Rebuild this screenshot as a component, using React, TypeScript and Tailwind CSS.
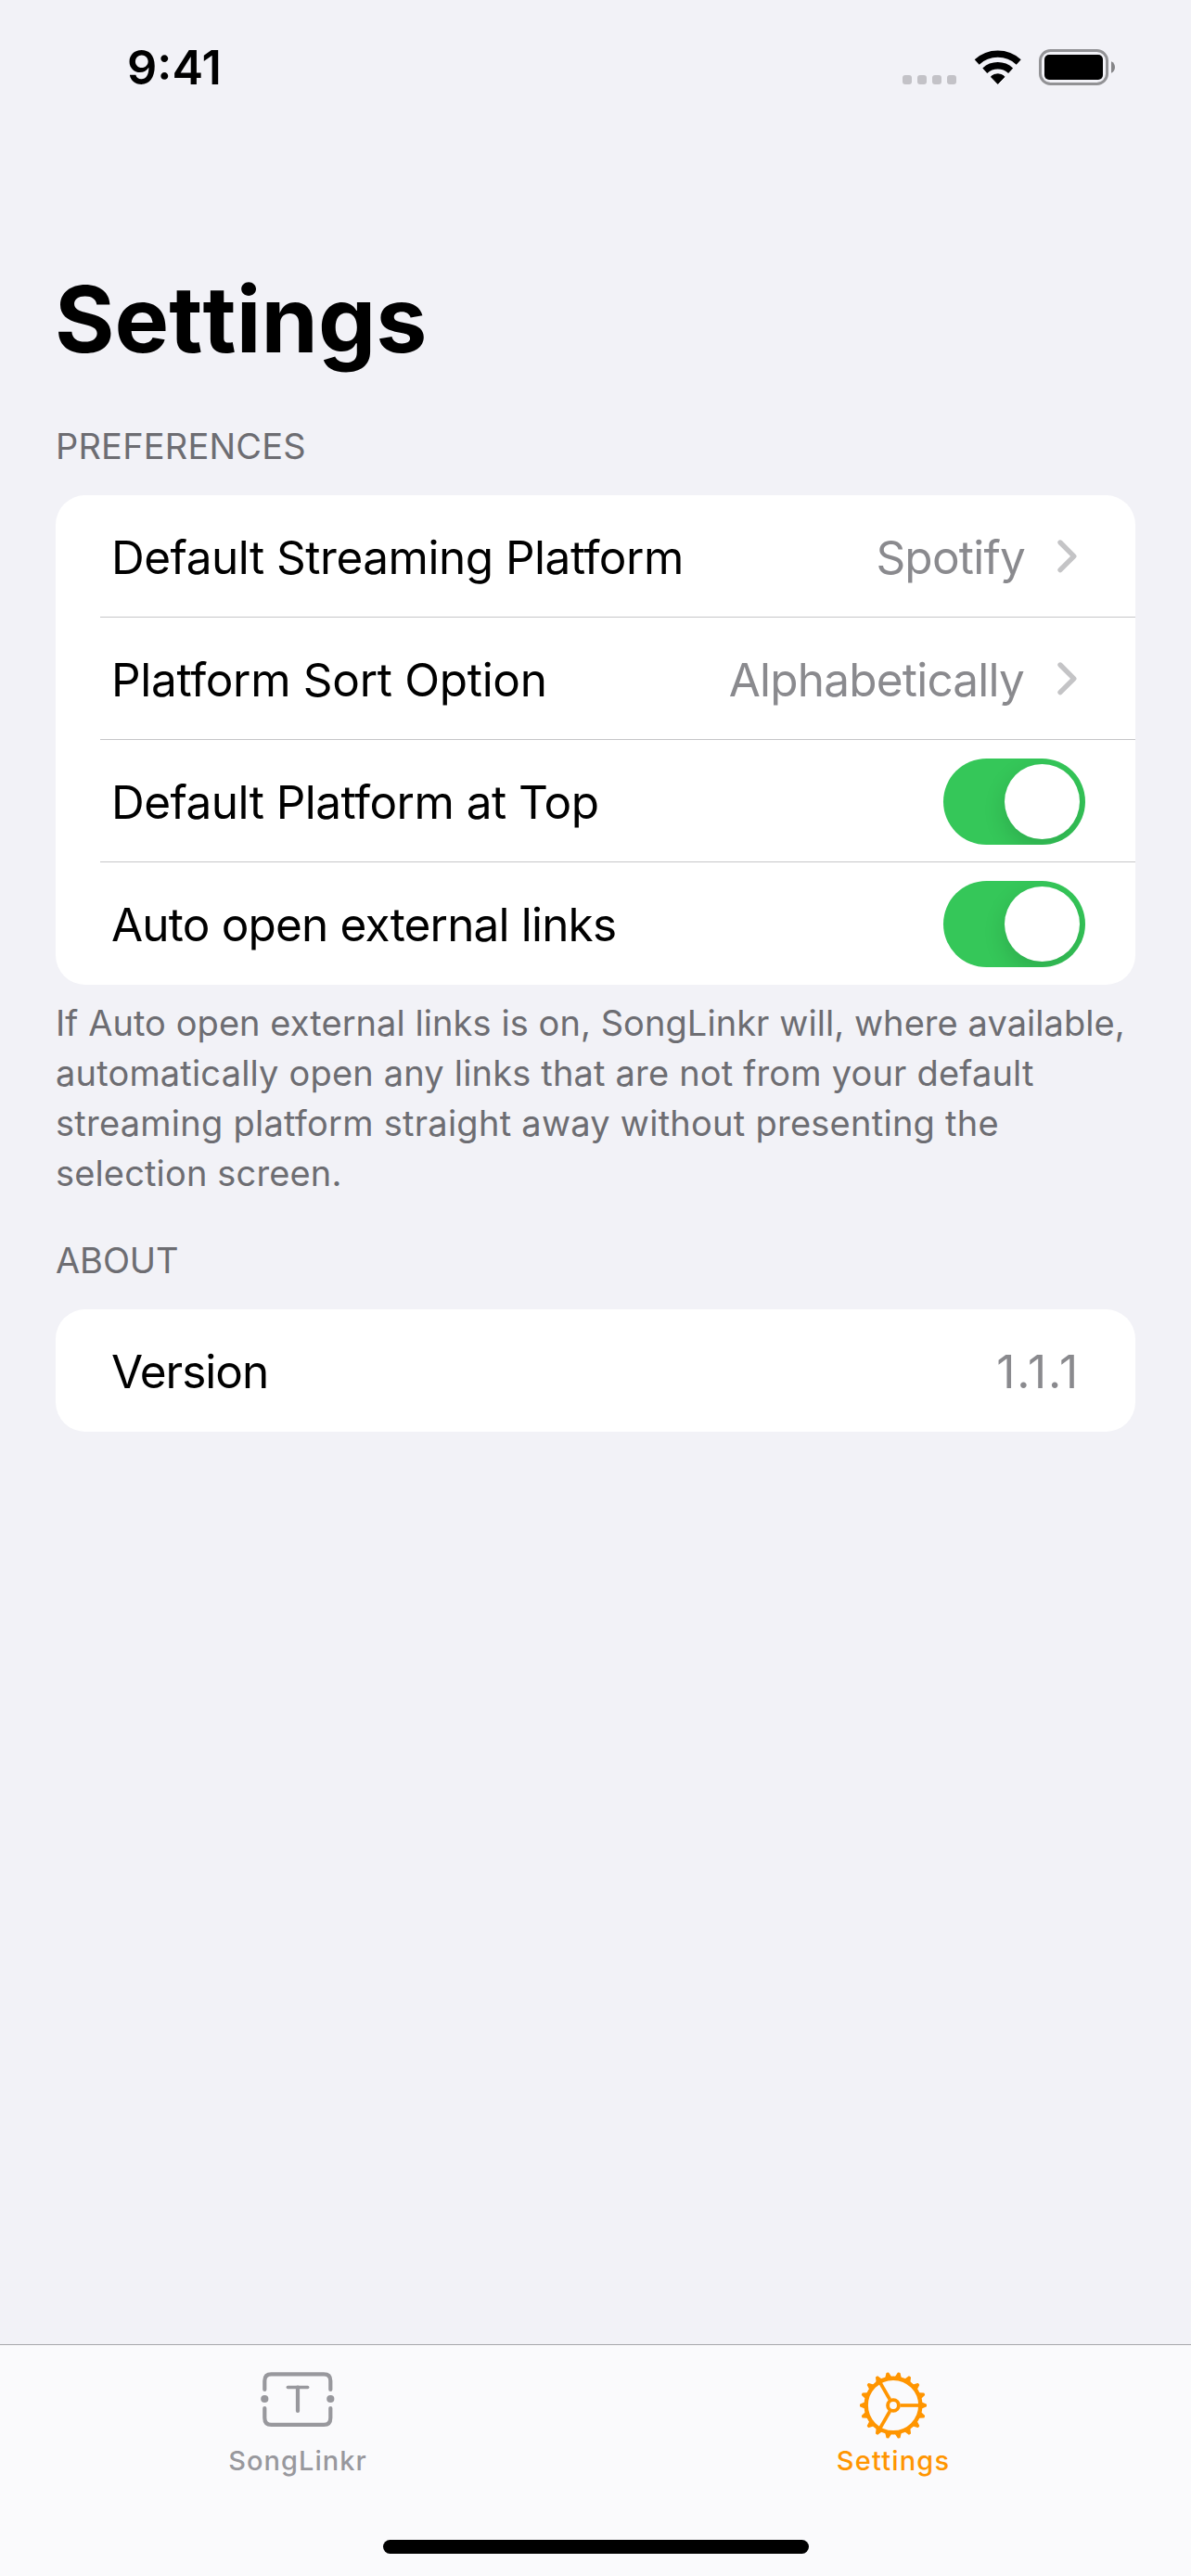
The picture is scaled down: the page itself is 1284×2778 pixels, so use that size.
import type { ReactNode } from "react";

function WifiIcon() {
  return (
    <svg className="h-[38px] w-[52px]" viewBox="0 0 52 38" fill="none">
      <g stroke="#000" strokeWidth="7.4">
        <path d="M3.2 12.9A33.3 33.3 0 0 1 48.2 12.9" />
        <path d="M11.8 22.2A20.6 20.6 0 0 1 39.6 22.2" />
      </g>
      <path
        d="M25.7 36.4L18.8 29.2Q18.4 28.6 19 28.1A11.2 11.2 0 0 1 32.4 28.1Q33 28.6 32.6 29.2Z"
        fill="#000"
        stroke="#000"
        strokeWidth="1"
        strokeLinejoin="round"
      />
    </svg>
  );
}

function BatteryIcon() {
  return (
    <svg className="h-[39px] w-[82px]" viewBox="0 0 82 39" fill="none">
      <rect x="1.5" y="1.5" width="72" height="36" rx="11" stroke="#929295" strokeWidth="3" />
      <rect x="6" y="6" width="63" height="27" rx="5" fill="#000" />
      <path d="M78 13.3C80.6 14.3 82 16.8 82 19.5C82 22.2 80.6 24.7 78 25.7Z" fill="#858588" />
    </svg>
  );
}

function Chevron() {
  return (
    <svg className="h-[38px] w-[23px]" viewBox="0 0 23 38" fill="none">
      <path
        d="M4 4L18.8 18.8L4 33.6"
        stroke="#c4c4c6"
        strokeWidth="5.4"
        strokeLinecap="round"
        strokeLinejoin="round"
      />
    </svg>
  );
}

function TicketIcon() {
  return (
    <svg className="h-[60px] w-[80px]" viewBox="0 0 80 60" fill="none">
      <g stroke="#98989d" strokeLinecap="round" strokeLinejoin="round" strokeWidth="4.2">
        <path d="M4 18.9V9.5Q4 2.3 11.2 2.3H67.8Q75 2.3 75 9.5V18.9" transform="translate(.3)" />
        <path d="M4 39.1V49.5Q4 56.9 11.2 56.9H67.8Q75 56.9 75 49.5V39.1" transform="translate(.3)" />
      </g>
      <circle cx="4.3" cy="29" r="4.1" fill="#98989d" />
      <circle cx="75.3" cy="29" r="4.1" fill="#98989d" />
      <g stroke="#98989d" strokeLinecap="round">
        <path d="M29.3 16.6H50.7" strokeWidth="3.5" />
        <path d="M40 16.6V42" strokeWidth="4.2" />
      </g>
    </svg>
  );
}

const TEETH = Array.from({ length: 18 }, (_, i) => i * 20);

function GearIcon() {
  return (
    <svg className="h-[74px] w-[74px]" viewBox="-37 -37 74 74" fill="none" stroke="#ff9500">
      <circle r="29.3" strokeWidth="4.4" />
      <circle r="5.9" strokeWidth="3.9" />
      {[0, 120, 240].map((a) => (
        <path key={a} d="M7.5 0H29" strokeWidth="3.7" transform={`rotate(${a})`} />
      ))}
      {TEETH.map((a) => (
        <path
          key={a}
          d="M30.5 -2.7L35.2 -.7V.7L30.5 2.7Z"
          fill="#ff9500"
          strokeWidth="1.6"
          strokeLinejoin="round"
          transform={`rotate(${a})`}
        />
      ))}
    </svg>
  );
}

function Toggle() {
  return (
    <span className="flex h-[93px] w-[153px] items-center justify-end overflow-hidden rounded-full bg-[#35c759] pr-[6px]">
      <span className="size-[81px] rounded-full bg-white shadow-[0_9px_24px_rgba(0,0,0,0.14)]" />
    </span>
  );
}

function Row({ label, labelClass, last, children }: { label: string; labelClass: string; last?: boolean; children: ReactNode }) {
  return (
    <div className="flex h-[132px] pl-[48px]">
      <div
        className={
          last
            ? "flex flex-1 items-center justify-between pl-[12px]"
            : "flex flex-1 items-center justify-between border-b border-[#c6c6c8] pl-[12px]"
        }
      >
        <span className={`pt-[2px] text-[49.5px] leading-[130px] whitespace-nowrap ${labelClass}`}>{label}</span>
        {children}
      </div>
    </div>
  );
}

function Value({ text, className }: { text: string; className: string }) {
  return <span className={`pt-[2px] text-[49.5px] leading-[130px] text-[#8a8a8e] ${className}`}>{text}</span>;
}

export default function App() {
  return (
    <div className="flex h-[2778px] w-[1284px] flex-col overflow-hidden bg-[#f2f2f7] font-['Inter',sans-serif] text-black">
      <header className="flex h-[132px] items-start justify-between pr-[82px] pl-[137px]">
        <span className="mt-[43px] text-[50.5px] leading-[60px] font-semibold">9:41</span>
        <div className="flex pt-[53px]">
          <div className="mt-[28px] flex gap-[6px]">
            <i className="size-[10px] rounded-[3px] bg-[#c3c2c7]" />
            <i className="size-[10px] rounded-[3px] bg-[#c3c2c7]" />
            <i className="size-[10px] rounded-[3px] bg-[#c3c2c7]" />
            <i className="size-[10px] rounded-[3px] bg-[#c3c2c7]" />
          </div>
          <div className="mt-px ml-[19px]">
            <WifiIcon />
          </div>
          <div className="ml-[18px]">
            <BatteryIcon />
          </div>
        </div>
      </header>

      <main className="flex flex-1 flex-col px-[60px]">
        <h1 className="mt-[153px] -ml-px text-[98.5px] leading-[120px] font-bold tracking-[0.1px] [font-kerning:none]">
          Settings
        </h1>

        <h2 className="mt-[53px] text-[38px] leading-[46px] tracking-[0.2px] text-[#6d6d72]">PREFERENCES</h2>
        <section className="mt-[30px] rounded-[32px] bg-white">
          <Row label="Default Streaming Platform" labelClass="tracking-[-0.49px]">
            <div className="flex items-center pr-[62px]">
              <Value text="Spotify" className="tracking-[-0.78px]" />
              <span className="ml-[34px]">
                <Chevron />
              </span>
            </div>
          </Row>
          <Row label="Platform Sort Option" labelClass="tracking-[-0.31px]">
            <div className="flex items-center pr-[62px]">
              <Value text="Alphabetically" className="tracking-[-0.8px]" />
              <span className="ml-[35px]">
                <Chevron />
              </span>
            </div>
          </Row>
          <Row label="Default Platform at Top" labelClass="tracking-[-0.53px]">
            <div className="pt-[2px] pr-[54px]">
              <Toggle />
            </div>
          </Row>
          <Row label="Auto open external links" labelClass="tracking-[-0.82px]" last>
            <div className="pt-px pr-[54px]">
              <Toggle />
            </div>
          </Row>
        </section>
        <p className="mt-[14px] text-[38px] leading-[54px] whitespace-nowrap text-[#6d6d72]">
          <span className="block tracking-[0.065px]">
            If Auto open external links is on, SongLinkr will, where available,
          </span>
          <span className="block tracking-[0.182px]">automatically open any links that are not from your default</span>
          <span className="block tracking-[0.256px]">streaming platform straight away without presenting the</span>
          <span className="block tracking-[0.15px]">selection screen.</span>
        </p>

        <h2 className="mt-[44px] text-[38px] leading-[46px] tracking-[-0.1px] text-[#6d6d72]">ABOUT</h2>
        <section className="mt-[30px] rounded-[32px] bg-white">
          <Row label="Version" labelClass="tracking-[-1px]" last>
            <Value text="1.1.1" className="pr-[60px] tracking-[1.89px]" />
          </Row>
        </section>
      </main>

      <footer className="flex h-[250px] flex-col border-t border-[#a7a7ab] bg-[#fafafc]">
        <nav className="grid h-[210px] grid-cols-2">
          <div className="flex flex-col items-center pt-[29px] text-[#98989d]">
            <TicketIcon />
            <span className="mt-[18px] text-[29px] leading-[36px] font-medium tracking-[1.05px]">SongLinkr</span>
          </div>
          <div className="flex flex-col items-center pt-[28px] text-[#ff9500]">
            <GearIcon />
            <span className="mt-[5px] text-[29px] leading-[36px] font-medium tracking-[1.17px]">Settings</span>
          </div>
        </nav>
        <div className="h-[15px] w-[459px] self-center rounded-full bg-black" />
      </footer>
    </div>
  );
}
